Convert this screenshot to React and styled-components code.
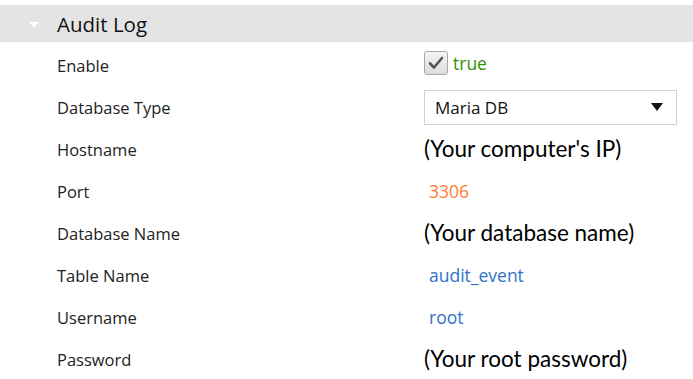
import React from "react";
import styled, { createGlobalStyle } from "styled-components";

const GlobalStyle = createGlobalStyle`
  body {
    margin: 0;
    background: #fff;
    font-family: "Open Sans", "Noto Sans", sans-serif;
  }
`;

const rows = [
  { label: "Enable", kind: "check", value: "true" },
  { label: "Database Type", kind: "select", value: "Maria DB" },
  { label: "Hostname", kind: "note", value: "(Your computer's IP)" },
  { label: "Port", kind: "number", value: "3306" },
  { label: "Database Name", kind: "note", value: "(Your database name)" },
  { label: "Table Name", kind: "text", value: "audit_event" },
  { label: "Username", kind: "text", value: "root" },
  { label: "Password", kind: "note", value: "(Your root password)" },
];

export default function App() {
  return (
    <Panel>
      <GlobalStyle />
      <Header>
        <Caret />
        <Title>Audit Log</Title>
      </Header>
      <Rows>
        {rows.map((row) => (
          <Row key={row.label}>
            <Label>{row.label}</Label>
            <Value>{renderValue(row)}</Value>
          </Row>
        ))}
      </Rows>
    </Panel>
  );
}

function renderValue(row) {
  if (row.kind === "check") {
    return (
      <CheckWrap>
        <CheckBox>
          <svg width="16" height="14" viewBox="0 0 16 14">
            <path
              d="M2 7.5 L6 11.5 L14 2"
              fill="none"
              stroke="#555"
              strokeWidth="2.6"
              strokeLinecap="round"
              strokeLinejoin="round"
            />
          </svg>
        </CheckBox>
        <Plain color="#2f8f00">{row.value}</Plain>
      </CheckWrap>
    );
  }
  if (row.kind === "select") {
    return (
      <Select>
        <span>{row.value}</span>
        <Arrow />
      </Select>
    );
  }
  if (row.kind === "note") return <Note>{row.value}</Note>;
  if (row.kind === "number") return <Plain color="#ff7a35">{row.value}</Plain>;
  return <Plain color="#2f73c8">{row.value}</Plain>;
}

const Panel = styled.div`
  padding-top: 5px;
  width: 693px;
`;

const Header = styled.div`
  display: flex;
  align-items: center;
  height: 37px;
  background: #e4e4e4;
`;

const Caret = styled.div`
  width: 0;
  height: 0;
  margin-left: 29px;
  margin-top: 2px;
  border-left: 5px solid transparent;
  border-right: 5px solid transparent;
  border-top: 6px solid #fff;
`;

const Title = styled.div`
  margin-left: 18px;
  font-size: 20.5px;
  color: #111;
`;

const Rows = styled.div`
  padding-top: 2px;
`;

const Row = styled.div`
  display: grid;
  grid-template-columns: 424px 253px;
  align-items: center;
  height: 42px;
`;

const Label = styled.div`
  padding-left: 57px;
  font-size: 16.5px;
  color: #222;
`;

const Value = styled.div`
  display: flex;
  align-items: center;
`;

const CheckWrap = styled.div`
  display: flex;
  align-items: center;
  margin-top: -4px;
`;

const CheckBox = styled.div`
  display: flex;
  align-items: center;
  justify-content: center;
  width: 22px;
  height: 22px;
  border: 1px solid #a8a8a8;
  border-radius: 3px;
  background: linear-gradient(#f4f4f4, #dcdcdc);
`;

const Plain = styled.span`
  padding-left: 5px;
  font-size: 17.5px;
  color: ${(p) => p.color};
`;

const Select = styled.div`
  display: flex;
  align-items: center;
  justify-content: space-between;
  box-sizing: border-box;
  width: 253px;
  height: 35px;
  padding: 0 13px 0 10px;
  border: 1px solid #d2d2d2;
  font-size: 17px;
  color: #111;
`;

const Arrow = styled.div`
  width: 0;
  height: 0;
  border-left: 6px solid transparent;
  border-right: 6px solid transparent;
  border-top: 8px solid #111;
`;

const Note = styled.span`
  font-family: "Lato", "Open Sans", sans-serif;
  font-size: 22.5px;
  color: #000;
  margin-top: -2px;
`;
